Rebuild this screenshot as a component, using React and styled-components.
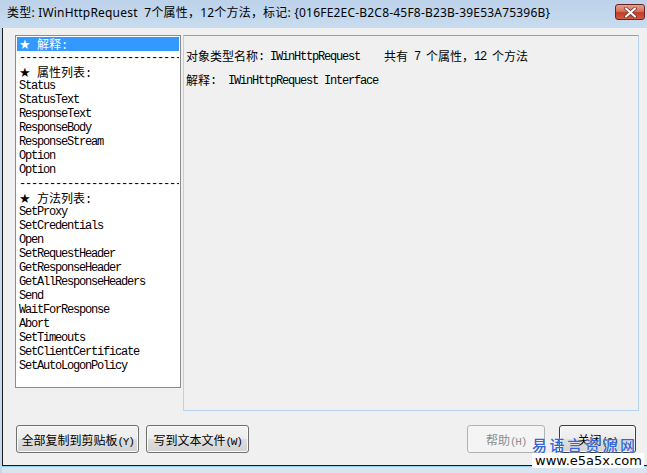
import React from "react";
import styled, { createGlobalStyle } from "styled-components";

const Global = createGlobalStyle`
  html, body { margin: 0; padding: 0; background: #f0f0f0; }
  * { box-sizing: border-box; }
`;

const Window = styled.div`
  position: relative;
  width: 647px;
  height: 473px;
  display: flex;
  flex-direction: column;
  background: #c6d9ec;
  overflow: hidden;
`;

const TitleBar = styled.div`
  height: 28px;
  flex: none;
  display: flex;
  align-items: flex-start;
  padding: 5px 2px 0 7px;
  background: linear-gradient(#bcd2ea, #c9dcef);
  font-family: "Noto Sans", "Noto Sans CJK SC", sans-serif;
  font-size: 12px;
  letter-spacing: 0.2px;
  color: #000;
  white-space: pre;
`;

const TitleText = styled.div`
  line-height: 16px;
`;

const CloseBtn = styled.div`
  margin-left: auto;
  margin-top: -1px;
  width: 30px;
  height: 16px;
  border: 1px solid #6b2222;
  border-radius: 3px;
  background: linear-gradient(#e6a08a 0%, #d5725a 45%, #c23d27 55%, #cf5a43 100%);
  display: flex;
  align-items: center;
  justify-content: center;
`;

const Frame = styled.div`
  flex: 1;
  display: flex;
  flex-direction: column;
  padding-left: 2px;
`;

const Client = styled.div`
  height: 438px;
  flex: none;
  background: #f0f0f0;
  border-left: 1px solid #1c1c1c;
  border-bottom: 1px solid #1c1c1c;
  padding: 7px 0 0 12px;
  display: flex;
  flex-direction: column;
`;

const Strip = styled.div`
  flex: 1;
  border-top: 1px solid #8fd0f0;
  background: #d8e4ef;
`;

const Panes = styled.div`
  display: grid;
  grid-template-columns: 166px 456px;
  column-gap: 2px;
  align-items: start;
`;

const ListBox = styled.div`
  height: 353px;
  background: #fff;
  border: 1px solid #8a8c8f;
  padding: 1px;
  overflow: hidden;
`;

const Item = styled.div`
  height: 14px;
  line-height: 14px;
  padding-left: 2px;
  white-space: pre;
  font-family: "Noto Sans CJK SC", sans-serif;
  font-size: 12px;
  color: ${(p) => (p.$selected ? "#fff" : "#000")};
  background: ${(p) => (p.$selected ? "#3399ff" : "transparent")};
`;

const DashItem = styled(Item)`
  overflow: hidden;
  line-height: 10px;
`;

const Star = styled.span`
  display: inline-block;
  width: 18px;
  font-family: "DejaVu Sans", sans-serif;
  font-size: 13px;
`;

const Mono = styled.span`
  font-family: "Liberation Mono", monospace;
  font-size: 12px;
  letter-spacing: -1.2px;
  vertical-align: ${(p) => (p.$raise ?? 1)}px;
`;

const Cjk = styled.span`
  font-family: "Noto Sans CJK SC", sans-serif;
  font-size: 12px;
`;

const InfoPanel = styled.div`
  height: 376px;
  border: 1px solid #b7d2ec;
  border-top-color: #78a8da;
  padding: 13px 2px 0 2px;
  display: flex;
  flex-direction: column;
  gap: 10px;
`;

const InfoLine = styled.div`
  height: 14px;
  line-height: 14px;
  white-space: pre;
  color: #000;
`;

const ButtonRow = styled.div`
  display: flex;
  margin-top: 14px;
  padding-left: 1px;
`;

const Button = styled.button`
  width: ${(p) => p.$w}px;
  height: 28px;
  margin-left: ${(p) => p.$gap || 0}px;
  padding: 0;
  border: 1px solid ${(p) => (p.$default ? "#3c3c3c" : "#707070")};
  border-radius: 3px;
  background: linear-gradient(#f4f4f4 0%, #ececec 48%, #dedede 52%, #d2d2d2 100%);
  box-shadow: inset 0 0 0 1px #fafafa;
  font-family: "Noto Sans CJK SC", sans-serif;
  font-size: 12px;
  color: #000;
  white-space: pre;
  &:disabled {
    color: #8d8d8d;
    border-color: #b0b3b6;
    background: #f4f4f4;
    box-shadow: none;
  }
`;

const Small = styled.span`
  font-family: "Liberation Mono", monospace;
  font-size: 11px;
  letter-spacing: -1.2px;
`;

const Watermark = styled.div`
  position: absolute;
  left: 532px;
  top: 437px;
  display: flex;
  flex-direction: column;
  align-items: flex-start;
`;

const MarkCn = styled.div`
  font-family: "Noto Sans CJK SC", sans-serif;
  font-weight: 500;
  font-size: 15px;
  line-height: 16px;
  letter-spacing: 2.6px;
  color: #3466d6;
  text-shadow: 0 0 1px #fff;
`;

const MarkUrl = styled.div`
  background: #fff;
  padding: 0 2px 0 3px;
  font-family: "DejaVu Sans", sans-serif;
  font-size: 13px;
  line-height: 15px;
  color: #000;
`;

const props = ["Status", "StatusText", "ResponseText", "ResponseBody", "ResponseStream", "Option", "Option"];
const methods = [
  "SetProxy",
  "SetCredentials",
  "Open",
  "SetRequestHeader",
  "GetResponseHeader",
  "GetAllResponseHeaders",
  "Send",
  "WaitForResponse",
  "Abort",
  "SetTimeouts",
  "SetClientCertificate",
  "SetAutoLogonPolicy",
];

const dashes = "-".repeat(32);

export default function App() {
  return (
    <>
      <Global />
      <Window>
        <TitleBar>
          <TitleText>类型: IWinHttpRequest  7个属性，12个方法，标记: {"{016FE2EC-B2C8-45F8-B23B-39E53A75396B}"}</TitleText>
          <CloseBtn>
            <svg width="13" height="11" viewBox="0 0 13 11">
              <path d="M2 1.5 L11 9.5 M11 1.5 L2 9.5" stroke="#5a2a25" strokeWidth="3.6" strokeLinecap="round" />
              <path d="M2 1.5 L11 9.5 M11 1.5 L2 9.5" stroke="#fff" strokeWidth="2.2" strokeLinecap="round" />
            </svg>
          </CloseBtn>
        </TitleBar>
        <Frame>
          <Client>
            <Panes>
              <ListBox>
                <Item $selected><Star>★</Star>解释<Mono $raise={0}>:</Mono></Item>
                <DashItem><Mono $raise={0}>{dashes}</Mono></DashItem>
                <Item><Star>★</Star>属性列表<Mono $raise={0}>:</Mono></Item>
                {props.map((p, i) => (
                  <Item key={"p" + i}><Mono $raise={2}>{p}</Mono></Item>
                ))}
                <DashItem><Mono $raise={0}>{dashes}</Mono></DashItem>
                <Item><Star>★</Star>方法列表<Mono $raise={0}>:</Mono></Item>
                {methods.map((m) => (
                  <Item key={m}><Mono $raise={2}>{m}</Mono></Item>
                ))}
              </ListBox>
              <InfoPanel>
                <InfoLine>
                  <Cjk>对象类型名称</Cjk><Mono>: IWinHttpRequest    </Mono><Cjk>共有</Cjk><Mono> 7 </Mono><Cjk>个属性，</Cjk><Mono>12 </Mono><Cjk>个方法</Cjk>
                </InfoLine>
                <InfoLine>
                  <Cjk>解释</Cjk><Mono>:  IWinHttpRequest Interface</Mono>
                </InfoLine>
              </InfoPanel>
            </Panes>
            <ButtonRow>
              <Button $w={123}>全部复制到剪贴板<Small>(Y)</Small></Button>
              <Button $w={103} $gap={7}>写到文本文件<Small>(W)</Small></Button>
              <Button $w={78} $gap={218} disabled>帮助<Small>(H)</Small></Button>
              <Button $w={77} $gap={14} $default>关闭<Small>(C)</Small></Button>
            </ButtonRow>
          </Client>
          <Strip />
        </Frame>
        <Watermark>
          <MarkCn>易语言资源网</MarkCn>
          <MarkUrl>www.e5a5x.com</MarkUrl>
        </Watermark>
      </Window>
    </>
  );
}
